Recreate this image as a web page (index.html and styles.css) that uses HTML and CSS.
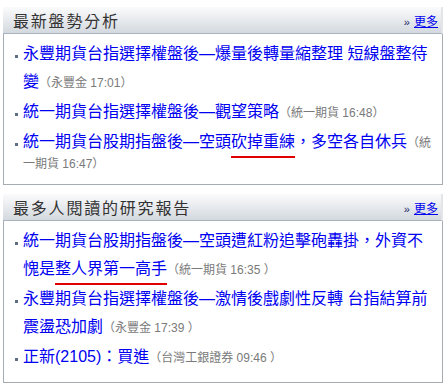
FILE: index.html
```html
<!DOCTYPE html>
<html lang="zh-Hant">
<head>
  <meta charset="UTF-8" />
  <meta name="viewport" content="width=device-width, initial-scale=1.0"/>
  <title>盤勢分析</title>
  <link rel="stylesheet" href="styles.css">
</head>
<body>
  <!-- 最新盤勢分析 -->
  <div class="panel">
    <div class="panel-head">
      <h2>最新盤勢分析</h2>
      <a class="more" href="#"><span class="arrow">»</span><u>更多</u></a>
    </div>
    <ul class="news">
      <li><a href="#">永豐期貨台指選擇權盤後—爆量後轉量縮整理 短線盤整待變</a><span class="src">（永豐金 17:01）</span></li>
      <li><a href="#">統一期貨台指選擇權盤後—觀望策略</a><span class="src">（統一期貨 16:48）</span></li>
      <li><a href="#">統一期貨台股期指盤後—空頭<span class="mark">砍掉重練</span>，多空各自休兵</a><span class="src">（統一期貨 16:47）</span></li>
    </ul>
  </div>

  <!-- 最多人閱讀的研究報告 -->
  <div class="panel">
    <div class="panel-head">
      <h2>最多人閱讀的研究報告</h2>
      <a class="more" href="#"><span class="arrow">»</span><u>更多</u></a>
    </div>
    <ul class="news">
      <li><a href="#">統一期貨台股期指盤後—空頭遭紅粉追擊砲轟掛，外資不愧是<span class="mark">整人界第一高手</span></a><span class="src">（統一期貨 16:35 ）</span></li>
      <li><a href="#">永豐期貨台指選擇權盤後—激情後戲劇性反轉 台指結算前震盪恐加劇</a><span class="src">（永豐金 17:39 ）</span></li>
      <li><a href="#">正新(2105)：買進</a><span class="src">（台灣工銀證券 09:46 ）</span></li>
    </ul>
  </div>

  <div class="panel">
    <div class="panel-head"></div>
  </div>
</body>
</html>
```

FILE: styles.css
```css
body {
  margin: 0;
  padding: 7px 4px 0 3px;
  background: #fff;
  font-family: 'Liberation Sans', 'Noto Sans CJK TC', sans-serif;
}

.panel {
  width: 440px;
  margin-bottom: 9px;
}

.panel + .panel + .panel {
  margin-top: -5px;
}

.panel-head {
  display: flex;
  justify-content: space-between;
  align-items: center;
  height: 26px;
  padding: 0 3px 0 10px;
  background: linear-gradient(#fbfbfc, #d3d9df);
  border-bottom: 1px solid #a9b3bd;
  border-right: 2px solid #e3e6e9;
}

.panel-head h2 {
  margin: 0;
  font-size: 16px;
  font-weight: normal;
  letter-spacing: 1.8px;
  color: #333;
}

.more {
  font-size: 12px;
  color: #0000ee;
  text-decoration: none;
}

.more .arrow {
  margin-right: 4px;
  color: #1a2a6a;
  font-size: 11px;
}

.news {
  list-style: none;
  margin: 0;
  padding: 6px 6px 11px 19px;
  border: 1px solid #a7acb1;
  border-top: none;
}

.news li {
  font-size: 12px;
  line-height: 17px;
  margin-bottom: 2px;
}

.news li:last-child {
  margin-bottom: 0;
}

.news li::before {
  content: '';
  display: inline-block;
  width: 3px;
  height: 3px;
  margin-left: -8px;
  margin-right: 5px;
  vertical-align: 1px;
  background: #5e6e82;
}

.news a {
  font-size: 16px;
  line-height: 28px;
  color: #0000f0;
  text-decoration: none;
}

.src {
  color: #7a7a7a;
}

/* red marker line */
.mark {
  text-decoration: underline 2px #e00000;
  text-underline-offset: 9px;
}
```
